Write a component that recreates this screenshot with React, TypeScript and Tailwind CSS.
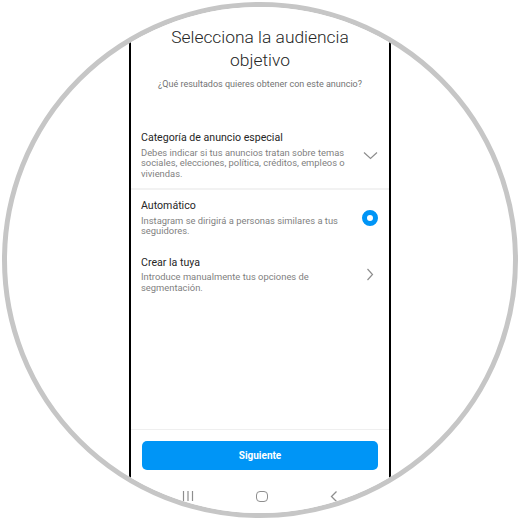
import React from 'react';

const font = { fontFamily: 'Roboto, "Noto Sans", sans-serif' };

const ChevronDown = () => (
  <svg width="15" height="9" viewBox="0 0 15 9" fill="none" stroke="#8e8e8e" strokeWidth="1.2">
    <path d="M1 1.5 L7.5 7.5 L14 1.5" />
  </svg>
);

const ChevronRight = () => (
  <svg width="8" height="13" viewBox="0 0 8 13" fill="none" stroke="#8e8e8e" strokeWidth="1.2">
    <path d="M1.5 1 L6.5 6.5 L1.5 12" />
  </svg>
);

const Radio = () => (
  <div className="w-[16px] h-[16px] rounded-full border-[5px] border-[#0095f6] bg-white" />
);

type RowProps = {
  title: string;
  text: string;
  right: React.ReactNode;
  className?: string;
};

const OptionRow: React.FC<RowProps> = ({ title, text, right, className }) => (
  <div className={`flex items-center pl-[10px] pr-[11px] ${className ?? ''}`}>
    <div className="flex-1 pr-[12px]">
      <div className="text-[10.6px] leading-[14px] text-[#262626]">{title}</div>
      <div className="mt-[2.5px] text-[9.4px] leading-[10.5px] text-[#7f7f7f]">{text}</div>
    </div>
    <div className="w-[16px] flex justify-center">{right}</div>
  </div>
);

export default function App() {
  return (
    <div className="w-[520px] h-[520px] bg-white flex items-center justify-center" style={font}>
      <div className="w-[516px] h-[516px] rounded-full border-[5px] border-[#c6c6c6] overflow-hidden flex justify-center">
        <div className="w-[262px] h-full border-x-2 border-black bg-white flex flex-col">
          {/* header */}
          <div className="pt-[19px] text-center">
            <h1 className="text-[17.4px] leading-[23px] font-light text-[#262626]">
              Selecciona la audiencia
              <br />
              objetivo
            </h1>
            <p className="mt-[5px] text-[9px] leading-[14px] text-[#737373]">
              ¿Qué resultados quieres obtener con este anuncio?
            </p>
          </div>

          {/* options */}
          <OptionRow
            className="mt-[40px] pb-[9px]"
            title="Categoría de anuncio especial"
            text="Debes indicar si tus anuncios tratan sobre temas sociales, elecciones, política, créditos, empleos o viviendas."
            right={<ChevronDown />}
          />
          <div className="h-[2px] bg-[#f2f2f2]" />
          <OptionRow
            className="mt-[9px]"
            title="Automático"
            text="Instagram se dirigirá a personas similares a tus seguidores."
            right={<Radio />}
          />
          <OptionRow
            className="mt-[19px]"
            title="Crear la tuya"
            text="Introduce manualmente tus opciones de segmentación."
            right={<ChevronRight />}
          />

          <div className="flex-1" />

          {/* footer */}
          <div className="h-px bg-[#efefef]" />
          <div className="px-[11px] pt-[11px]">
            <button className="w-full h-[29px] rounded-[5px] bg-[#0095f6] text-white text-[10px] font-bold">
              Siguiente
            </button>
          </div>
          <div className="mt-[13px] mb-[4px] h-[26px] flex items-center justify-center gap-[62px] text-[#8e8e8e]">
            <svg width="12" height="10" viewBox="0 0 12 10" stroke="#8e8e8e" strokeWidth="1.2">
              <path d="M1.5 0 V10 M6 0 V10 M10.5 0 V10" />
            </svg>
            <div className="w-[12px] h-[11px] rounded-[4px] border-[1.3px] border-[#8e8e8e]" />
            <svg width="8" height="11" viewBox="0 0 8 11" fill="none" stroke="#8e8e8e" strokeWidth="1.3">
              <path d="M6.5 0.5 L1.5 5.5 L6.5 10.5" />
            </svg>
          </div>
        </div>
      </div>
    </div>
  );
}
